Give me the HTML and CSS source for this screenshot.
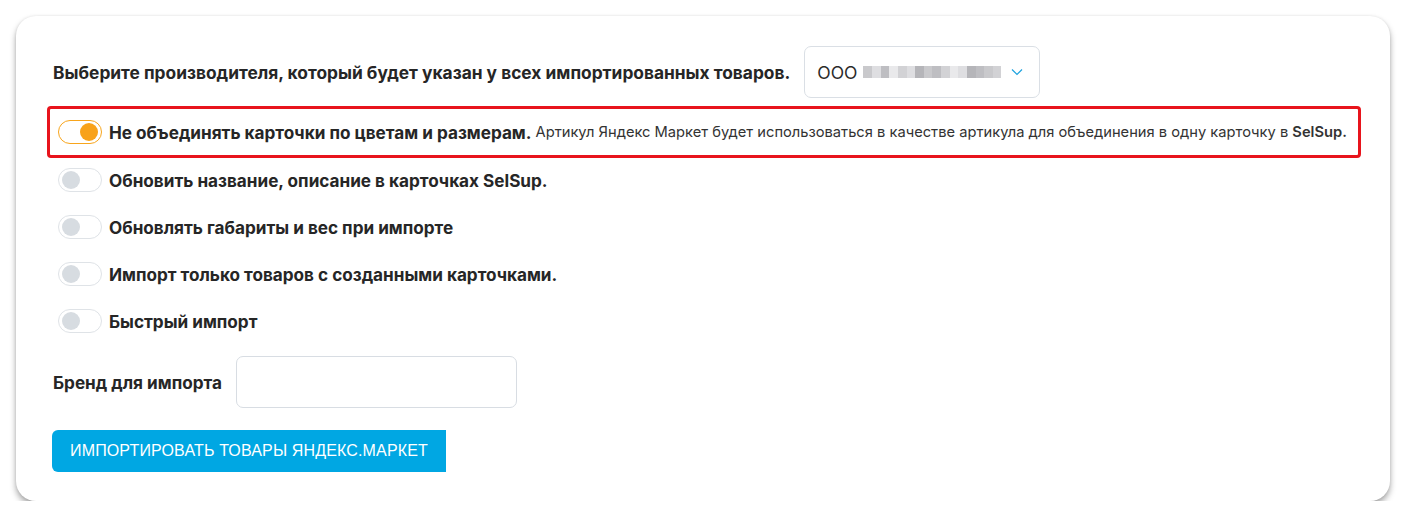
FILE: index.html
```html
<!DOCTYPE html>
<html lang="ru">
<head>
<meta charset="utf-8">
<link rel="stylesheet" href="styles.css">
</head>
<body>
<div class="page">
  <div class="card">
    <div class="maker-row">
      <span class="label title">Выберите производителя, который будет указан у всех импортированных товаров.</span>
      <div class="select">
        <span class="select-text">ООО</span>
        <span class="redacted"><i class="p1"></i><i class="p2"></i><i class="p3"></i><i class="p4"></i><i class="p5"></i><i class="p2"></i><i class="p6"></i><i class="p1"></i><i class="p3"></i><i class="p5"></i><i class="p4"></i><i class="p2"></i><i class="p6"></i><i class="p3"></i><i class="p1"></i><i class="p5"></i></span>
        <svg class="chev" width="12" height="8" viewBox="0 0 12 8"><path d="M1 1.5 L6 6.5 L11 1.5" fill="none" stroke="#1ea3df" stroke-width="1.2"/></svg>
      </div>
    </div>
    <div class="highlight">
      <div class="toggle-row">
        <span class="toggle on"><span class="knob"></span></span>
        <span class="label">Не объединять карточки по цветам и размерам.</span>
        <span class="hint">Артикул Яндекс Маркет будет использоваться в качестве артикула для объединения в одну карточку в <b>SelSup.</b></span>
      </div>
    </div>
    <div class="toggles">
      <div class="toggle-row"><span class="toggle"><span class="knob"></span></span><span class="label">Обновить название, описание в карточках SelSup.</span></div>
      <div class="toggle-row"><span class="toggle"><span class="knob"></span></span><span class="label">Обновлять габариты и вес при импорте</span></div>
      <div class="toggle-row"><span class="toggle"><span class="knob"></span></span><span class="label">Импорт только товаров с созданными карточками.</span></div>
      <div class="toggle-row"><span class="toggle"><span class="knob"></span></span><span class="label">Быстрый импорт</span></div>
    </div>
    <div class="brand-row">
      <span class="label">Бренд для импорта</span>
      <div class="input"></div>
    </div>
    <button class="import-btn">ИМПОРТИРОВАТЬ ТОВАРЫ ЯНДЕКС.МАРКЕТ</button>
  </div>
</div>
</body>
</html>
```

FILE: styles.css
```css
* { box-sizing: border-box; }
html, body { margin: 0; background: #ffffff; }
body { font-family: "Inter", "Liberation Sans", sans-serif; color: #2b2b2b; }

.page { padding: 16px 16px 0 16px; }

.card {
  width: 1374px;
  height: 485px;
  background: #fff;
  border-radius: 20px;
  box-shadow: 0 4px 6px rgba(0, 0, 0, 0.35), 0 0 3px rgba(0, 0, 0, 0.08);
  padding: 30px 29px 0 37px;
}

.label {
  font-weight: 700;
  font-size: 17.15px;
  color: #262626;
  white-space: nowrap;
}
.label.title { font-size: 17.35px; }

.maker-row {
  display: flex;
  align-items: center;
  gap: 14px;
  height: 52px;
}

.select {
  width: 236px;
  height: 52px;
  border: 1px solid #dadfe5;
  border-radius: 7px;
  display: flex;
  align-items: center;
  padding-left: 12px;
}
.select-text { font-size: 17.5px; color: #2a2a2a; margin-right: 6px; }
.redacted { display: flex; height: 12px; width: 138px; opacity: 0.75; }
.redacted i { display: block; flex: 1; height: 100%; }
.redacted .p1 { background: #b8b8bc; }
.redacted .p2 { background: #d4d4d8; }
.redacted .p3 { background: #a9a9ae; }
.redacted .p4 { background: #e2e2e5; }
.redacted .p5 { background: #c4c4c8; }
.redacted .p6 { background: #9d9da2; }
.chev { margin-left: 10px; }

.highlight {
  margin: 8px 0 0 -6px;
  height: 52px;
  border: 3px solid #e8141c;
  border-radius: 4px;
  padding-left: 8px;
  display: flex;
  align-items: center;
}

.toggle-row {
  display: flex;
  align-items: center;
  gap: 7px;
  height: 24px;
}

.toggle {
  flex: none;
  width: 44px;
  height: 24px;
  border: 1px solid #dfe3e7;
  border-radius: 12px;
  background: #fff;
  position: relative;
}
.toggle .knob {
  position: absolute;
  left: 3px;
  top: 2px;
  width: 18px;
  height: 18px;
  border-radius: 50%;
  background: #d7dce1;
}
.toggle.on { border-color: #f8a51c; }
.toggle.on .knob { left: auto; right: 3px; background: #f8a21a; }

.hint {
  font-size: 14.7px;
  color: #333;
  white-space: nowrap;
  margin-left: -3px;
}
.hint b { font-weight: 600; }

.toggles {
  display: flex;
  flex-direction: column;
  gap: 23px;
  margin-top: 10px;
  padding-left: 5px;
}

.brand-row {
  display: flex;
  align-items: center;
  gap: 14px;
  margin-top: 23px;
}
.input {
  width: 281px;
  height: 52px;
  border: 1px solid #d8dde3;
  border-radius: 7px;
}

.import-btn {
  margin: 22px 0 0 -1px;
  height: 42px;
  padding: 0 18px;
  background: #00a7e3;
  color: #fff;
  border: none;
  border-radius: 6px 0 0 6px;
  font-family: "Liberation Sans", Arial, sans-serif;
  font-size: 16px;
  letter-spacing: 0.15px;
  cursor: pointer;
}
```
